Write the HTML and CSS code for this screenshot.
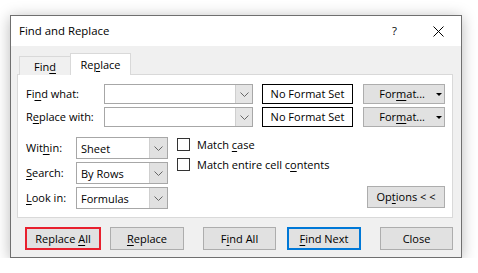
FILE: index.html
```html
<!DOCTYPE html>
<html lang="en">
<head>
    <meta charset="UTF-8">
    <title>Find and Replace</title>
    <link rel="stylesheet" href="styles.css">
</head>
<body>
    <div class="dialog">
        <div class="titlebar">
            <span class="title">Find and Replace</span>
            <span class="help">?</span>
            <span class="close-x">
                <svg width="11" height="11" viewBox="0 0 11 11"><path d="M0.5 0.5 L10.5 10.5 M10.5 0.5 L0.5 10.5" stroke="#000" stroke-width="1" fill="none"/></svg>
            </span>
        </div>
        <div class="body">
            <div class="tabs">
                <div class="tab">Fin<u>d</u></div>
                <div class="tab active">Re<u>p</u>lace</div>
            </div>
            <div class="panel">
                <div class="row">
                    <label class="label">Fi<u>n</u>d what:</label>
                    <div class="combo">
                        <span class="combo-text"></span>
                        <span class="drop"><svg width="9" height="5" viewBox="0 0 9 5"><path d="M0.5 0.5 L4.5 4.5 L8.5 0.5" stroke="#666" fill="none"/></svg></span>
                    </div>
                    <div class="noformat">No Format Set</div>
                    <div class="btn fmt"><span>For<u>m</u>at...</span><span class="tri"></span></div>
                </div>
                <div class="row">
                    <label class="label">R<u>e</u>place with:</label>
                    <div class="combo">
                        <span class="combo-text"></span>
                        <span class="drop"><svg width="9" height="5" viewBox="0 0 9 5"><path d="M0.5 0.5 L4.5 4.5 L8.5 0.5" stroke="#666" fill="none"/></svg></span>
                    </div>
                    <div class="noformat">No Format Set</div>
                    <div class="btn fmt"><span>For<u>m</u>at...</span><span class="tri"></span></div>
                </div>
                <div class="lower">
                    <div class="selects">
                        <div class="srow">
                            <label class="slabel">Wit<u>h</u>in:</label>
                            <div class="combo small">
                                <span class="combo-text">Sheet</span>
                                <span class="drop"><svg width="9" height="5" viewBox="0 0 9 5"><path d="M0.5 0.5 L4.5 4.5 L8.5 0.5" stroke="#666" fill="none"/></svg></span>
                            </div>
                        </div>
                        <div class="srow">
                            <label class="slabel"><u>S</u>earch:</label>
                            <div class="combo small">
                                <span class="combo-text">By Rows</span>
                                <span class="drop"><svg width="9" height="5" viewBox="0 0 9 5"><path d="M0.5 0.5 L4.5 4.5 L8.5 0.5" stroke="#666" fill="none"/></svg></span>
                            </div>
                        </div>
                        <div class="srow">
                            <label class="slabel"><u>L</u>ook in:</label>
                            <div class="combo small">
                                <span class="combo-text">Formulas</span>
                                <span class="drop"><svg width="9" height="5" viewBox="0 0 9 5"><path d="M0.5 0.5 L4.5 4.5 L8.5 0.5" stroke="#666" fill="none"/></svg></span>
                            </div>
                        </div>
                    </div>
                    <div class="checks">
                        <div class="check"><span class="box"></span><span>Match <u>c</u>ase</span></div>
                        <div class="check"><span class="box"></span><span>Match entire cell c<u>o</u>ntents</span></div>
                    </div>
                    <div class="btn options">Op<u>t</u>ions &lt; &lt;</div>
                </div>
            </div>
            <div class="buttons">
                <div class="btn b-all">Replace <u>A</u>ll</div>
                <div class="btn b-rep"><u>R</u>eplace</div>
                <div class="btn b-findall">F<u>i</u>nd All</div>
                <div class="btn b-next"><u>F</u>ind Next</div>
                <div class="btn b-close">Close</div>
            </div>
        </div>
    </div>
</body>
</html>
```

FILE: styles.css
```css
* {
    box-sizing: border-box;
}
body {
    margin: 0;
    padding: 15px 0 0 10px;
    background: #fff;
    font-family: 'Open Sans', 'Noto Sans', sans-serif;
    font-size: 11px;
    color: #000;
}
u {
    text-underline-offset: 2px;
}
.dialog {
    width: 452px;
    height: 243px;
    border: 1px solid #6f6f6f;
    background: #f0f0f0;
    box-shadow: 0 2px 14px rgba(0,0,0,0.28);
}
.titlebar {
    height: 30px;
    background: #fff;
    display: flex;
    align-items: center;
    padding-left: 8px;
    font-size: 11.4px;
}
.title {
    flex: 1;
    padding-bottom: 1px;
}
.help {
    width: 12px;
    margin-right: 29px;
    padding-bottom: 1px;
}
.close-x {
    display: flex;
    margin-right: 17px;
}
.body {
    padding-top: 7px;
}
.tabs {
    display: flex;
    align-items: flex-end;
    margin-left: 8px;
    margin-bottom: -1px;
}
.tab {
    height: 19px;
    width: 52px;
    border: 1px solid #d9d9d9;
    border-bottom: none;
    background: #f0f0f0;
    text-align: center;
    line-height: 19px;
}
.tab.active {
    position: relative;
    width: 61px;
    height: 22px;
    margin-left: -1px;
    background: #fff;
    line-height: 21px;
}
.panel {
    margin-left: 6px;
    width: 436px;
    height: 144px;
    border: 1px solid #d9d9d9;
    background: #fff;
    padding: 9px 7px 0 8px;
}
.row {
    display: flex;
    height: 20px;
    margin-bottom: 3px;
}
.label {
    width: 78px;
    line-height: 19px;
}
.combo {
    display: flex;
    width: 149px;
    height: 20px;
    border: 1px solid #a7a7a7;
    background: #fff;
}
.combo-text {
    flex: 1;
    padding-left: 4px;
    line-height: 19px;
}
.drop {
    width: 17px;
    background: #e5e5e5;
    border-left: 1px solid #cfcfcf;
    display: flex;
    align-items: center;
    justify-content: center;
}
.noformat {
    margin-left: 9px;
    width: 91px;
    border: 1px solid #000;
    text-align: center;
    line-height: 18px;
}
.btn {
    background: #e1e1e1;
    border: 1px solid #adadad;
    text-align: center;
}
.fmt {
    margin-left: 10px;
    width: 82px;
    line-height: 18px;
    padding-right: 2px;
    display: flex;
    justify-content: flex-end;
    align-items: center;
}
.tri {
    display: inline-block;
    width: 0;
    height: 0;
    border-left: 3px solid transparent;
    border-right: 3px solid transparent;
    border-top: 3px solid #000;
    margin-left: 11px;
}
.lower {
    display: flex;
    margin-top: 10px;
}
.selects {
    display: flex;
    flex-direction: column;
    gap: 3px;
}
.srow {
    display: flex;
}
.slabel {
    width: 50px;
    line-height: 21px;
}
.combo.small {
    width: 92px;
    height: 22px;
}
.combo.small .combo-text {
    line-height: 21px;
}
.combo.small .drop {
    width: 18px;
    background: #e1e1e1;
}
.checks {
    margin-left: 9px;
    padding-top: 1px;
    display: flex;
    flex-direction: column;
    gap: 7px;
}
.check {
    display: flex;
    align-items: center;
    height: 13px;
}
.box {
    width: 13px;
    height: 13px;
    border: 1px solid #333;
    background: #fff;
    margin-right: 7px;
}
.options {
    margin-left: auto;
    margin-top: 49px;
    width: 78px;
    height: 22px;
    line-height: 20px;
}
.buttons {
    display: flex;
    margin-top: 9px;
    padding-left: 14px;
}
.buttons .btn {
    height: 23px;
    line-height: 21px;
}
.b-all {
    width: 76px;
    border: 2px solid #e8202e;
    line-height: 19px !important;
}
.b-rep {
    width: 74px;
    margin-left: 9px;
}
.b-findall {
    width: 73px;
    margin-left: 19px;
}
.b-next {
    width: 74px;
    margin-left: 11px;
    border: 2px solid #0078d7;
    line-height: 19px !important;
}
.b-close {
    width: 73px;
    margin-left: 19px;
}
```
